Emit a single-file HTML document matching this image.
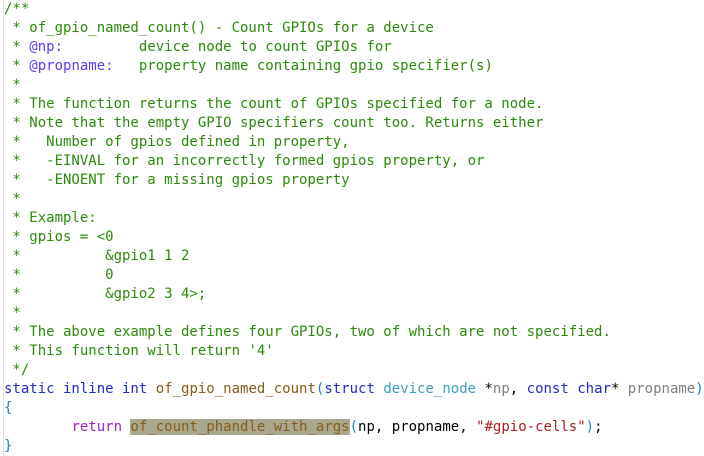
<!DOCTYPE html>
<html><head><meta charset="utf-8"><style>
html,body{margin:0;padding:0;background:#fff;width:704px;height:456px;overflow:hidden}
pre{margin:0;position:absolute;left:4px;top:0px;font-family:"DejaVu Sans Mono","Liberation Mono",monospace;font-size:14px;line-height:19px;color:#000;white-space:pre}
.c{color:#2b8a0c}.d{color:#5a3cf0}.k{color:#1c2ccc}.f{color:#8a5a18}.t{color:#3aa0c0}.g{color:#808080}.r{color:#a020c0}.s{color:#b02020}.p{color:#2080c0}
.h{background:#a8a890}
.guide{position:absolute;left:3px;top:0;width:1px;height:456px;background:#e4e4e4}
</style></head><body>
<div class="guide"></div>
<pre><span class="c">/**
 * of_gpio_named_count() - Count GPIOs for a device
 * <span class="d">@np:</span>         device node to count GPIOs for
 * <span class="d">@propname:</span>   property name containing gpio specifier(s)
 *
 * The function returns the count of GPIOs specified for a node.
 * Note that the empty GPIO specifiers count too. Returns either
 *   Number of gpios defined in property,
 *   -EINVAL for an incorrectly formed gpios property, or
 *   -ENOENT for a missing gpios property
 *
 * Example:
 * gpios = &lt;0
 *          &amp;gpio1 1 2
 *          0
 *          &amp;gpio2 3 4&gt;;
 *
 * The above example defines four GPIOs, two of which are not specified.
 * This function will return '4'
 */</span>
<span class="k">static inline int</span> <span class="f">of_gpio_named_count</span><span class="p">(</span><span class="k">struct</span> <span class="t">device_node</span> *<span class="g">np</span>, <span class="k">const char</span>* <span class="g">propname</span><span class="p">)</span>
<span class="p">{</span>
        <span class="r">return</span> <span class="f h">of_count_phandle_with_args</span><span class="p">(</span>np, propname, <span class="s">"#gpio-cells"</span><span class="p">)</span>;
<span class="p">}</span></pre>
</body></html>
